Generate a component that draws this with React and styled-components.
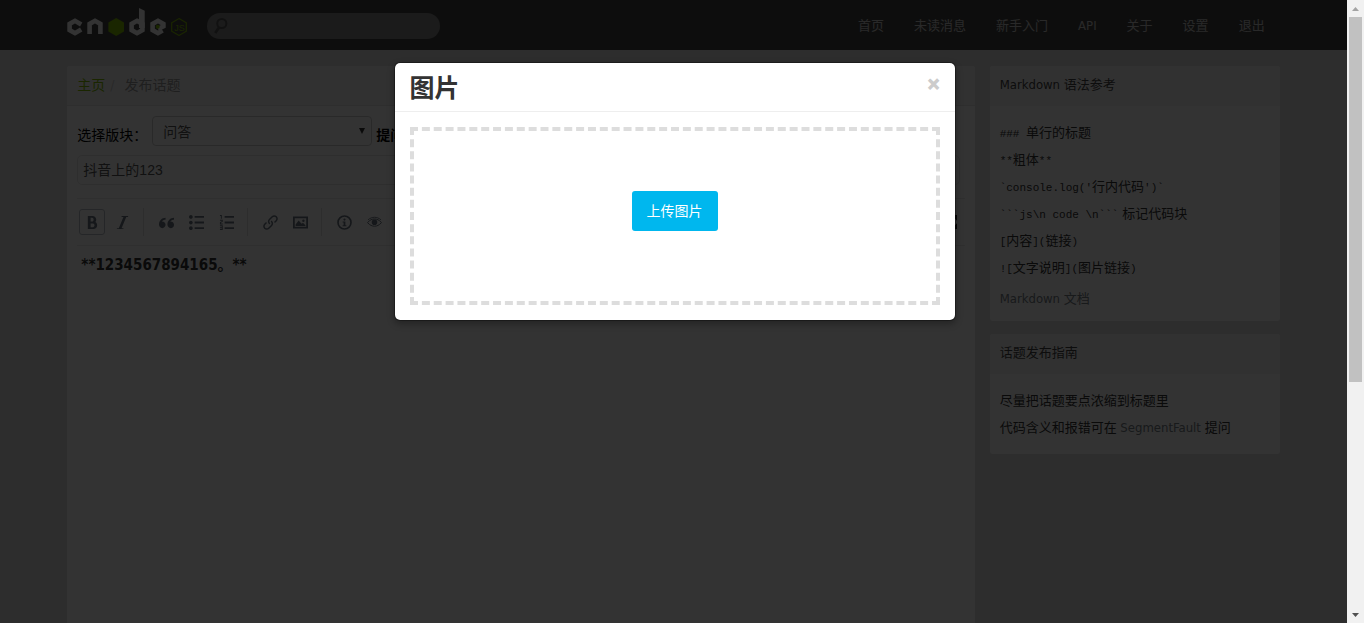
import React from "react";
import styled, { createGlobalStyle, css } from "styled-components";
import {
  ImBold,
  ImItalic,
  ImQuotesLeft,
  ImList2,
  ImListNumbered,
  ImLink,
  ImEnlarge,
} from "react-icons/im";

const sans = `"DejaVu Sans Condensed", "Noto Sans CJK SC", sans-serif`;
const arial = `"Liberation Sans", "Noto Sans CJK SC", sans-serif`;

const GlobalStyle = createGlobalStyle`
  *, *::before, *::after { box-sizing: border-box; }
  body { margin: 0; overflow: hidden; font: 14px/20px ${sans}; color: #333; }
  input, select, textarea, button { font-family: inherit; }
`;

const Shell = styled.div`
  display: grid;
  grid-template-columns: minmax(0, 1fr) 17px;
  height: 100vh;
`;

const Page = styled.div`
  position: relative;
  overflow: hidden;
  background: #e1e1e1;
`;

const Container = styled.div`
  width: 90%;
  margin: 0 auto;
  display: flex;
`;

const Navbar = styled.header`
  background: #444;
`;

const NavInner = styled(Container)`
  height: 50px;
  align-items: center;
`;

const Brand = styled.a`
  display: flex;
  width: 120px;
  height: 34px;
  margin-right: 20px;
`;

const SearchForm = styled.form`
  display: flex;
  align-items: center;
  width: 233px;
  height: 26px;
  margin-top: 2px;
  padding: 0 7px;
  border-radius: 13px;
  background: #888;
`;

const SearchInput = styled.input`
  flex: 1;
  min-width: 0;
  border: 0;
  outline: 0;
  background: transparent;
  font-size: 13px;
`;

const NavLinks = styled.nav`
  display: flex;
  margin-left: auto;
`;

const NavLink = styled.a`
  padding: 1px 15px 0;
  font-size: 13px;
  color: #ccc;
  text-decoration: none;
`;

const Columns = styled(Container)`
  gap: 15px;
  padding-top: 16px;
  align-items: flex-start;
`;

const Main = styled.main`
  flex: 1;
  min-width: 0;
`;

const Sidebar = styled.aside`
  flex: none;
  width: 290px;
  display: flex;
  flex-direction: column;
  gap: 13px;
`;

const Panel = styled.section`
  border-radius: 3px;
  overflow: hidden;
  background: #fff;
`;

const PanelHeader = styled.div`
  height: 40px;
  padding: 9px 10px;
  font-size: ${(p) => (p.$large ? 14 : 13)}px;
  line-height: 20px;
  color: #444;
  background: #f6f6f6;
  border-bottom: 1px solid ${(p) => (p.$large ? "#e5e5e5" : "#f6f6f6")};
`;

const Crumb = styled.a`
  color: #80bd01;
  text-decoration: none;
`;

const Slash = styled.span`
  padding: 0 10px 0 5px;
  color: #ccc;
`;

const Current = styled.span`
  color: #999;
`;

const Form = styled.form`
  padding: 10px;
`;

const FieldRow = styled.div`
  display: flex;
  align-items: center;
  gap: 4px;
  height: 30px;
  color: #000;
`;

const FieldLabel = styled.label`
  padding-top: 8px;
  width: 71px;
  white-space: nowrap;
`;

const FieldNote = styled.strong`
  padding-top: 8px;
`;

const SelectWrap = styled.span`
  position: relative;
  width: 220px;
  height: 30px;

  svg {
    position: absolute;
    right: 7px;
    top: 12px;
    pointer-events: none;
  }
`;

const Select = styled.select`
  appearance: none;
  width: 100%;
  height: 30px;
  padding: 2px 10px 0;
  border: 1px solid #ccc;
  border-radius: 4px;
  background: #fff;
  font-size: 14px;
  color: #555;
`;

const TitleInput = styled.input`
  display: block;
  width: calc(100% - 5px);
  height: 30px;
  margin: 9px 0 13px;
  padding: 0 5px 2px;
  border: 1px solid #e6e6e6;
  border-radius: 5px;
  font: 14px/20px ${arial};
  color: #555;
`;

const Toolbar = styled.div`
  display: flex;
  align-items: center;
  height: 48px;
  border-top: 1px solid #eaeaea;
  border-bottom: 1px solid #eaeaea;
`;

const Tool = styled.button`
  flex: none;
  display: grid;
  place-items: center;
  width: 26px;
  height: 26px;
  margin: 0 2px;
  padding: 0;
  border: 1px solid ${(p) => (p.$active ? "#b8bfc6" : "transparent")};
  border-radius: 3px;
  background: transparent;
  color: ${(p) => (p.$dark ? "#222" : "#6c7682")};
  ${(p) =>
    p.$last &&
    css`
      margin-left: auto;
    `}
`;

const Divider = styled.i`
  width: 1px;
  height: 28px;
  margin: 0 7px 0 6px;
  background: #e2e2e2;
`;

const Editor = styled.textarea`
  display: block;
  width: 100%;
  height: 560px;
  padding: 9px 4px;
  border: 0;
  outline: 0;
  resize: none;
  background: transparent;
  font: bold 15px/20px ${sans};
  color: #333;
`;

const TipList = styled.ol`
  margin: 0;
  padding: 13px 10px;
  list-style: none;
  font-size: 13px;
  line-height: 27px;
  color: #333;
`;

const LinkTip = styled.li`
  padding-top: 4px;
  margin-bottom: -4px;
`;

const Code = styled.code`
  font-family: "Noto Sans CJK SC", sans-serif;
  font-size: 13px;
  line-height: 1;
  color: #333;
`;

const Mono = styled.span`
  font-family: "Liberation Mono", monospace;
  font-size: 11px;
`;

const GreyLink = styled.a`
  color: #778087;
  text-decoration: none;
`;

const Backdrop = styled.div`
  position: absolute;
  inset: 0;
  background: rgba(0, 0, 0, 0.8);
`;

const Dialog = styled.div`
  position: absolute;
  top: 10%;
  left: 50%;
  width: 562px;
  margin-left: -280px;
  border: 1px solid rgba(0, 0, 0, 0.3);
  border-radius: 6px;
  background: #fff;
  background-clip: padding-box;
  box-shadow: 0 3px 7px rgba(0, 0, 0, 0.3);
`;

const DialogHeader = styled.div`
  display: flex;
  justify-content: space-between;
  padding: 11px 15px 7px;
  border-bottom: 1px solid #eee;
`;

const DialogTitle = styled.h3`
  margin: 0;
  font-size: 25px;
  line-height: 30px;
  color: #333;
`;

const CloseButton = styled.button`
  height: 20px;
  padding: 0;
  border: 0;
  background: none;
  font: bold 20px/20px ${arial};
  -webkit-text-stroke: 1px #ccc;
  color: #ccc;
`;

const DialogBody = styled.div`
  padding: 15px;
`;

const DropZone = styled.div`
  display: flex;
  justify-content: center;
  padding: 60px 0 70px;
  border: 4px dashed #ddd;
`;

const UploadButton = styled.button`
  height: 40px;
  padding: 0 15px;
  border: 0;
  border-radius: 3px;
  background: #00b7ee;
  font-size: 14px;
  line-height: 20px;
  color: #fff;
`;

const Scrollbar = styled.div`
  display: flex;
  flex-direction: column;
  background: #f1f1f1;
`;

const ScrollArrow = styled.span`
  flex: none;
  display: grid;
  place-items: center;
  height: 17px;
`;

const ScrollTrack = styled.div`
  flex: 1;
  padding: 0 2px;
`;

const ScrollThumb = styled.div`
  height: 62%;
  background: #c1c1c1;
`;

function Logo() {
  return (
    <svg width="120" height="28" viewBox="0 0 120 28" aria-label="CNode">
      <g fill="none" stroke="#fff" strokeWidth="4.6">
        <polyline points="14.2,16.4 8,12.8 2.6,15.9 2.6,22.1 8,25.2 14.2,21.6" />
        <polyline points="22.6,26 22.6,15.9 28,12.8 33.4,15.9 33.4,26" />
        <polygon points="70,12.8 75.4,15.9 75.4,22.1 70,25.2 64.6,22.1 64.6,15.9" />
        <polyline points="91,21 96.4,18.4 96.4,15.9 91,12.8 85.6,15.9 85.6,22.1 91,25.2 95.6,22.6" />
      </g>
      <polygon points="72,0 77.7,2.8 77.7,20 72,20" fill="#fff" />
      <polygon points="49.2,10 57,14.4 57,23.6 49.2,28 41.4,23.6 41.4,14.4" fill="#80bd01" />
      <circle cx="90.7" cy="18.8" r="2" fill="#80bd01" />
      <polygon
        points="112,10.6 119.3,14.8 119.3,23.2 112,27.4 104.7,23.2 104.7,14.8"
        fill="none"
        stroke="#80bd01"
        strokeWidth="1.2"
      />
      <text x="112.4" y="22.5" textAnchor="middle" fontFamily="Liberation Sans" fontSize="9" fill="#80bd01">
        JS
      </text>
    </svg>
  );
}

function SearchIcon() {
  return (
    <svg width="14" height="18" viewBox="0 0 14 18" fill="none" stroke="#555" strokeWidth="2">
      <circle cx="7.8" cy="6.5" r="4.6" />
      <path d="M5.2 10.2 1.2 16" strokeWidth="2.8" />
    </svg>
  );
}

function PictureIcon() {
  return (
    <svg width="15" height="15" viewBox="0 0 15 15" fill="currentColor">
      <path fillRule="evenodd" d="M0 1.5h15v12H0zM1.8 3.3v8.4h11.4V3.3z" />
      <path d="M2.6 10.9V9.4l3-4 3 3.4 1.4-1 2.4 2.4v.7z" />
      <circle cx="10.4" cy="5.7" r="1.2" />
    </svg>
  );
}

function InfoIcon() {
  return (
    <svg width="15" height="15" viewBox="0 0 15 15" fill="currentColor">
      <circle cx="7.5" cy="7.5" r="6.5" fill="none" stroke="currentColor" strokeWidth="1.7" />
      <circle cx="7.5" cy="4.6" r="1.1" />
      <path d="M5.6 6.5h2.8v3.7h1v1.1H5.6v-1.1h1V7.6h-1z" />
    </svg>
  );
}

function EyeIcon() {
  return (
    <svg width="15" height="15" viewBox="0 0 15 15" fill="none" stroke="currentColor">
      <path d="M.5 7.6C3 4.9 5 4 7.5 4s4.5.9 7 3.6c-2.500 2.700-4.500 3.600-7 3.600S3 10.300.5 7.600z" />
      <path d="M1 4.800C3.200 3 5.200 2.300 7.500 2.300S11.800 3 14 4.800" strokeWidth=".9" />
      <circle cx="7.5" cy="7.3" r="2.1" fill="currentColor" strokeWidth="1.4" />
    </svg>
  );
}

const navItems = ["首页", "未读消息", "新手入门", "API", "关于", "设置", "退出"];

const toolGroups = [
  [
    ["加粗", ImBold, true],
    ["斜体", ImItalic],
  ],
  [
    ["引用", ImQuotesLeft],
    ["无序列表", ImList2],
    ["有序列表", ImListNumbered],
  ],
  [
    ["链接", ImLink],
    ["图片", PictureIcon],
  ],
  [
    ["帮助", InfoIcon],
    ["预览", EyeIcon],
  ],
];

const tips = [
  [["###\u00a0"], "单行的标题"],
  [["**"], "粗体", ["**"]],
  [["`console.log('"], "行内代码", ["')`"]],
  [["```js\\n code \\n```"]],
  [["["], "内容", ["]("], "链接", [")"]],
  [["!["], "文字说明", ["]("], "图片链接", [")"]],
];

export default function App() {
  return (
    <Shell>
      <GlobalStyle />
      <Page>
        <Navbar>
          <NavInner>
            <Brand href="#">
              <Logo />
            </Brand>
            <SearchForm>
              <SearchIcon />
              <SearchInput type="text" aria-label="搜索" />
            </SearchForm>
            <NavLinks>
              {navItems.map((item) => (
                <NavLink href="#" key={item}>
                  {item}
                </NavLink>
              ))}
            </NavLinks>
          </NavInner>
        </Navbar>

        <Columns>
          <Main>
            <Panel>
              <PanelHeader $large>
                <Crumb href="#">主页</Crumb>
                <Slash>/</Slash>
                <Current>发布话题</Current>
              </PanelHeader>
              <Form>
                <FieldRow>
                  <FieldLabel htmlFor="tab">选择版块：</FieldLabel>
                  <SelectWrap>
                    <Select id="tab" defaultValue="ask">
                      <option value="ask">问答</option>
                    </Select>
                    <svg width="6" height="6" viewBox="0 0 6 6">
                      <path d="M0 0h6L3 6z" fill="#333" />
                    </svg>
                  </SelectWrap>
                  <FieldNote>提问</FieldNote>
                </FieldRow>
                <TitleInput aria-label="标题" defaultValue="抖音上的123" />
                <Toolbar>
                  {toolGroups.map((group, i) => (
                    <React.Fragment key={i}>
                      {i > 0 && <Divider />}
                      {group.map(([label, Icon, active]) => (
                        <Tool type="button" key={label} aria-label={label} $active={active}>
                          <Icon size={15} />
                        </Tool>
                      ))}
                    </React.Fragment>
                  ))}
                  <Tool type="button" aria-label="全屏" $dark $last>
                    <ImEnlarge size={14} />
                  </Tool>
                </Toolbar>
                <Editor aria-label="正文" defaultValue="**1234567894165。**" />
              </Form>
            </Panel>
          </Main>

          <Sidebar>
            <Panel>
              <PanelHeader>Markdown 语法参考</PanelHeader>
              <TipList>
                {tips.map((parts, i) => (
                  <li key={i}>
                    <Code>
                      {parts.map((part, j) =>
                        Array.isArray(part) ? <Mono key={j}>{part[0]}</Mono> : part
                      )}
                    </Code>
                    {i === 3 && " 标记代码块"}
                  </li>
                ))}
                <LinkTip>
                  <GreyLink href="#">Markdown 文档</GreyLink>
                </LinkTip>
              </TipList>
            </Panel>
            <Panel>
              <PanelHeader>话题发布指南</PanelHeader>
              <TipList>
                <li>尽量把话题要点浓缩到标题里</li>
                <li>
                  代码含义和报错可在 <GreyLink href="#">SegmentFault</GreyLink> 提问
                </li>
              </TipList>
            </Panel>
          </Sidebar>
        </Columns>

        <Backdrop />
        <Dialog role="dialog" aria-labelledby="dialog-title">
          <DialogHeader>
            <DialogTitle id="dialog-title">图片</DialogTitle>
            <CloseButton type="button" aria-label="关闭">
              ×
            </CloseButton>
          </DialogHeader>
          <DialogBody>
            <DropZone>
              <UploadButton type="button">上传图片</UploadButton>
            </DropZone>
          </DialogBody>
        </Dialog>
      </Page>

      <Scrollbar aria-hidden="true">
        <ScrollArrow>
          <svg width="7" height="4" viewBox="0 0 7 4">
            <path d="M0 4h7L3.5 0z" fill="#a3a3a3" />
          </svg>
        </ScrollArrow>
        <ScrollTrack>
          <ScrollThumb />
        </ScrollTrack>
        <ScrollArrow>
          <svg width="7" height="4" viewBox="0 0 7 4">
            <path d="M0 0h7L3.5 4z" fill="#505050" />
          </svg>
        </ScrollArrow>
      </Scrollbar>
    </Shell>
  );
}
